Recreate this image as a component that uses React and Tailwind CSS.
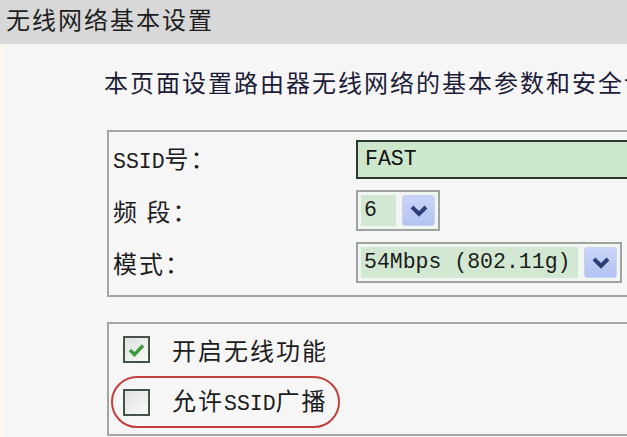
import React from 'react';

const cjk = { fontFamily: '"Noto Sans CJK SC", "Noto Sans", sans-serif' };
const mono = { fontFamily: '"Liberation Mono", "Noto Sans CJK SC", monospace' };

function Chevron() {
  return (
    <svg width="18" height="12" viewBox="0 0 18 12">
      <path d="M2 2 L9 9 L16 2" fill="none" stroke="#2c3f78" strokeWidth="4" strokeLinejoin="miter" />
    </svg>
  );
}

function Select({ value, width }) {
  return (
    <div className={`flex items-stretch h-[41px] border-2 border-[#9ea3a0] bg-[#f2f6f2] p-[3px] gap-[6px] ${width}`}>
      <div className="flex-1 flex items-center bg-[#d3e8d3] pl-[3px] text-[21.5px] text-[#1b1b1b] leading-none" style={mono}>
        {value}
      </div>
      <div className="w-[33px] flex items-center justify-center rounded-[3px] bg-gradient-to-b from-[#c9d4f7] to-[#b3c3f1] border border-[#c8d2ef]">
        <Chevron />
      </div>
    </div>
  );
}

function Checkbox({ checked }) {
  return (
    <div className="w-[27px] h-[27px] border-2 border-[#45524a] bg-gradient-to-br from-[#dfe3df] to-[#f8faf8] flex items-center justify-center">
      {checked && (
        <svg width="17" height="14" viewBox="0 0 17 14">
          <path d="M2 7 L6.5 11.5 L15 2.5" fill="none" stroke="#3f9a3f" strokeWidth="3.5" />
        </svg>
      )}
    </div>
  );
}

function Label({ children }) {
  return (
    <div className="w-[247px] pl-[4px] text-[24px] leading-none tracking-[2px] text-[#1c1c1c]" style={cjk}>
      {children}
    </div>
  );
}

export default function App() {
  return (
    <div className="w-[627px] h-[437px] overflow-hidden bg-[#f6f6f6] flex flex-col" style={cjk}>
      <div className="h-[44px] shrink-0 bg-[#d8d8d8] pl-[6px] pt-[7px] text-[24px] leading-none tracking-[2px] text-[#1e1e1e]">
        无线网络基本设置
      </div>
      <div className="flex-1 border-l-[4px] border-[#fbf6ee] pl-[100px]">
        <div className="pt-[26px] text-[24px] leading-[24px] tracking-[2px] text-[#1c1c38] whitespace-nowrap">
          本页面设置路由器无线网络的基本参数和安全设置。
        </div>
        <div className="mt-[36px] ml-[3px] w-[560px] border-2 border-[#a4a6a4] pt-[8px] pb-[12px] flex flex-col gap-[11px]">
          <div className="flex items-center h-[39px]">
            <Label>
              <span style={mono} className="text-[21.5px] tracking-normal">SSID</span>号：
            </Label>
            <div className="flex-1 h-[39px] border-2 border-[#2e372f] bg-[#cde7cd] flex items-center pl-[7px] text-[21.5px] leading-none text-[#111]" style={mono}>
              FAST
            </div>
          </div>
          <div className="flex items-center">
            <Label>频 段：</Label>
            <Select value="6" width="w-[84px]" />
          </div>
          <div className="flex items-center">
            <Label>模式：</Label>
            <Select value="54Mbps (802.11g)" width="w-[266px]" />
          </div>
        </div>
        <div className="mt-[25px] ml-[3px] w-[560px] h-[114px] border-2 border-[#a4a6a4] pt-[12px]">
          <div className="flex items-center pl-[14px] gap-[22px]">
            <Checkbox checked />
            <span className="text-[24px] leading-none tracking-[2px] text-[#1c1c1c]">开启无线功能</span>
          </div>
          <div className="mt-[13px] ml-[2px] w-[229px] h-[52px] rounded-full border-2 border-[#c4403f] flex items-center pl-[10px] gap-[22px]">
            <Checkbox />
            <span className="text-[24px] leading-none tracking-[2px] text-[#1c1c1c] whitespace-nowrap">
              允许<span style={mono} className="text-[21.5px] tracking-normal">SSID</span>广播
            </span>
          </div>
        </div>
      </div>
    </div>
  );
}
